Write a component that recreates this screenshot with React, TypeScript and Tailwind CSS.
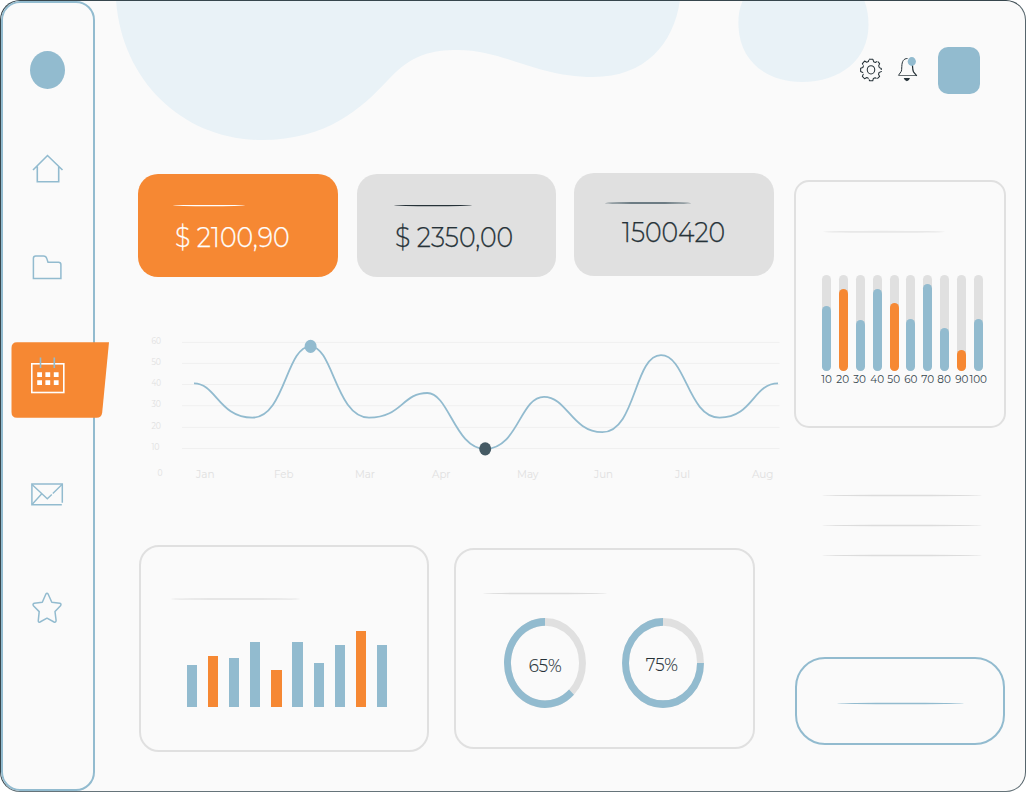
import React from "react";

const BLUE = "#92bbcf";
const ORANGE = "#f68833";

/* A hairline that swells in the middle and tapers at both ends. */
function Spindle({ width, color, cy = 1.5, ry = 0.7, className = "" }: {
  width: number;
  color: string;
  cy?: number;
  ry?: number;
  className?: string;
}) {
  return (
    <svg className={`block shrink-0 ${className}`} width={width} height={4} viewBox={`0 0 ${width} 4`}>
      <ellipse cx={width / 2} cy={cy} rx={width / 2} ry={ry} fill={color} />
    </svg>
  );
}

function Sidebar() {
  return (
    <aside className="flex h-[790px] w-[94px] shrink-0 flex-col rounded-[19px] border-2 border-[#92bbcf]">
      <div className="ml-[27px] mt-[48px] h-[38px] w-[35px] shrink-0 rounded-[50%] bg-[#92bbcf]" />

      <svg className="ml-[28px] mt-[64px] shrink-0" width="34" height="32" viewBox="31 153 34 32" fill="none" stroke={BLUE} strokeWidth="1.6">
        <path d="M33 170 47.5 155.5 62.5 170M37.3 166.5V181.7H58.7V166.5" />
      </svg>

      <svg className="ml-[28px] mt-[68px] shrink-0" width="34" height="28" viewBox="31 253 34 28" fill="none" stroke={BLUE} strokeWidth="1.5">
        <path d="M33.4 278.5V258.3Q33.4 256 35.7 256H43.5Q46 256 46.8 258.6L48 262.3H58.5Q60.9 262.3 60.9 264.6V278.5Z" />
      </svg>

      <div className="relative ml-[8px] mt-[61px] h-[76px] w-[98px] shrink-0">
        <svg className="block" width="98" height="76" viewBox="11 342 98 76">
          <path d="M17 342.3H109L102.2 412.5Q101.6 417.8 96.5 417.8H17Q11.5 417.8 11.5 412V348Q11.5 342.3 17 342.3Z" fill={ORANGE} />
          <rect x="31.8" y="363.8" width="32" height="28.7" fill="none" stroke="#fff" strokeWidth="1.6" />
          <path d="M40.5 357.5V368M54.3 357.5V368" stroke={BLUE} strokeWidth="1.6" />
          <path d="M37.2 372.3h4.8v4.8h-4.8zM45.4 372.3h4.8v4.8h-4.8zM53.8 372.3h4.8v4.8h-4.8zM37.2 380.3h4.8v4.8h-4.8zM45.4 380.3h4.8v4.8h-4.8zM53.8 380.3h4.8v4.8h-4.8z" fill="#fff" />
        </svg>
      </div>

      <svg className="ml-[26px] mt-[63px] shrink-0" width="36" height="28" viewBox="29 481 36 28" fill="none" stroke={BLUE} strokeWidth="1.5">
        <path d="M62.3 502.8V484H31.9V504.8H61.8" />
        <path d="M32 484.5 47.3 498.7 51.8 494.4M52.8 493.4 62 484.6M32 504.5 41.8 493.8" strokeWidth="1.4" />
      </svg>

      <svg className="ml-[27px] mt-[81px] shrink-0" width="34" height="36" viewBox="30 590 34 36" fill="none" stroke={BLUE} strokeWidth="1.5" strokeLinejoin="round">
        <path d="M45.8 594.2Q47 592.4 48.2 594.2L51.8 602.2 59.8 603.3Q61.8 604 60.5 605.7L55 611.6 56.1 620.3Q56.1 622.7 54 622L47 618.2 40 622Q38 622.7 38.3 620.3L39.2 611.6 33.4 605.7Q32.3 604 34.3 603.3L42.3 602.2Z" />
      </svg>
    </aside>
  );
}

function Header() {
  return (
    <header className="flex h-[172px] items-start justify-end pr-[45px] pt-[46px]">
      <svg className="mt-[10px]" width="24" height="26" viewBox="858.5 57 25 27" fill="none" stroke="#263238" strokeWidth="1.1">
        <path d="M868.9 59.4H873L873.8 62 875.5 62.7 877.8 61.3 880 63.8 879 66.2 879.7 68 881.7 69V72.2L879.4 73.1 878.8 75 880 77.2 877.5 79.7 875.3 78.5 873.5 79.3 872.8 81.7H869.5L868.6 79.3 866.7 78.4 864.3 79.6 862 77.1 863 74.8 862.4 73 860.2 72V68.7L862.5 67.9 863.2 66 862 63.8 864.3 61.2 866.5 62.4 868.3 61.7Z" strokeLinejoin="round" strokeDasharray="11 1" />
        <ellipse cx="871" cy="70.3" rx="3.9" ry="4.3" />
      </svg>
      <svg className="ml-[13px] mt-[8px]" width="24" height="30" viewBox="896 55 24 30" fill="none" stroke="#263238">
        <path d="M898.5 75.3 901.3 71.3Q901.7 70.5 901.8 66.5C902 61 903.8 58.5 907.5 58.5" strokeWidth="1" />
        <path d="M911.8 61C913 64 912 69 913.5 72L916.8 75.8" strokeWidth="1.2" />
        <path d="M898.5 75.5H917" strokeWidth=".7" />
        <path d="M903.7 78H910Q909 81.2 906.9 81.2T903.7 78Z" fill="#263238" stroke="none" />
        <ellipse cx="911.8" cy="61.5" rx="4.1" ry="4.4" fill={BLUE} stroke="none" />
      </svg>
      <div className="ml-[18px] h-[47px] w-[42px] rounded-[10px] bg-[#92bbcf]" />
    </header>
  );
}

function StatCards() {
  return (
    <div className="flex h-[104px] w-[636px] items-start justify-between">
      <div className="mt-px h-[103px] w-[200px] rounded-[20px] bg-[#f68833] pl-[35px] pt-[30px] text-white">
        <Spindle width={72} color="#fff" cy={1.6} />
        <p className="ml-[2px] w-fit origin-left scale-x-90 whitespace-nowrap text-[28px] font-light leading-[58px] [-webkit-text-stroke:0.25px]">$ 2100,90</p>
      </div>
      <div className="mt-px h-[103px] w-[199px] rounded-[20px] bg-[#e0e0e0] pl-[37px] pt-[30px] text-[#263238]">
        <Spindle width={78} color="#263238" cy={1.6} />
        <p className="ml-px w-fit origin-left scale-x-90 whitespace-nowrap text-[28px] font-light leading-[58px] [-webkit-text-stroke:0.25px]">$ 2350,00</p>
      </div>
      <div className="h-[103px] w-[200px] rounded-[20px] bg-[#e0e0e0] pl-[31px] pt-[28px] text-[#263238]">
        <Spindle width={86} color="#455a64" cy={2} ry={0.8} />
        <p className="ml-[17px] w-fit origin-left scale-x-90 whitespace-nowrap text-[28px] font-light leading-[54px] [-webkit-text-stroke:0.25px]">1500420</p>
      </div>
    </div>
  );
}

const yTicks: [string, number, number][] = [
  ["60", 343.7, 151.5],
  ["50", 365, 151.5],
  ["40", 385.7, 151.5],
  ["30", 407, 151.5],
  ["20", 429, 151.5],
  ["10", 450, 151.5],
  ["0", 476.3, 157.5],
];
const months: [string, number, number][] = [
  ["Jan", 196, 18.5],
  ["Feb", 274, 19.5],
  ["Mar", 355, 20],
  ["Apr", 432, 18.5],
  ["May", 517, 21.5],
  ["Jun", 594, 19],
  ["Jul", 675, 15],
  ["Aug", 752, 21.5],
];

function LineChart() {
  return (
    <svg className="mt-[48px] block overflow-visible" width="636" height="165" viewBox="138 325 636 165">
      {[342.4, 363.4, 384.5, 405.7, 427.4, 448.5].map((y) => (
        <path key={y} d={`M182 ${y}H779.5`} stroke="#f0f0f0" strokeWidth="1" />
      ))}
      {yTicks.map(([label, y, x]) => (
        <text key={label} x={x} y={y} fontSize="9" fill="#e0e0e0" textLength={label === "0" ? 5 : label === "10" ? 8 : 9.5} lengthAdjust="spacingAndGlyphs">
          {label}
        </text>
      ))}
      {months.map(([label, x, w]) => (
        <text key={label} x={x} y="478" fontSize="12" fill="#e0e0e0" textLength={w} lengthAdjust="spacingAndGlyphs">
          {label}
        </text>
      ))}
      <path
        d="M194 383.3C216 383.3 219 417.6 252.4 417.6C285 417.6 286 346.3 310.5 346.3C333 346.3 336 417.6 369 417.6C402 417.6 402 393 427.3 393C449 393 455 449 485.3 449C518 449 520 396.8 544 396.8C567 396.8 572 432.2 602.3 432.2C636 432.2 634 355.2 661 355.2C686 355.2 688 417.6 719.5 417.6C753 417.6 753 383.3 778 383.3"
        fill="none"
        stroke={BLUE}
        strokeWidth="1.8"
      />
      <ellipse cx="310.6" cy="346.4" rx="6" ry="6.6" fill={BLUE} />
      <ellipse cx="485.2" cy="448.8" rx="6" ry="6.6" fill="#455a64" />
    </svg>
  );
}

const columns = [
  { h: 42.5 },
  { h: 51.5, hot: true },
  { h: 48.7 },
  { h: 65 },
  { h: 37, hot: true },
  { h: 64.7 },
  { h: 43.7 },
  { h: 61.9 },
  { h: 75.8, hot: true },
  { h: 62.5 },
];

function ColumnCard() {
  return (
    <section className="ml-px h-[207px] w-[290px] shrink-0 rounded-[20px] border-2 border-[#e0e0e0] pl-[30px] pt-[50px]">
      <Spindle width={129} color="#e6e6e6" cy={2} ry={1} />
      <div className="ml-[15.5px] mt-[26px] flex h-[80px] w-[201px] items-end justify-between">
        {columns.map((c, i) => (
          <div key={i} className={c.hot ? "w-[10.3px] bg-[#f68833]" : "w-[10.3px] bg-[#92bbcf]"} style={{ height: c.h }} />
        ))}
      </div>
    </section>
  );
}

function Donut({ label, arc, shift }: { label: string; arc: string; shift: string }) {
  return (
    <div className="grid h-[90px] w-[82px] place-items-center *:[grid-area:1/1]">
      <svg width="82" height="90" viewBox="0 0 82 82" preserveAspectRatio="none" fill="none" strokeWidth="6.9">
        <circle cx="41" cy="41" r="37.5" stroke="#e0e0e0" />
        <path d={arc} stroke={BLUE} />
      </svg>
      <span className={`scale-x-90 whitespace-nowrap text-[18.5px] font-light leading-none text-[#263238] [-webkit-text-stroke:0.15px] ${shift}`}>{label}</span>
    </div>
  );
}

function DonutCard() {
  return (
    <section className="mt-[3px] h-[201px] w-[301px] shrink-0 rounded-[20px] border-2 border-[#e0e0e0] pl-[27px] pt-[42px]">
      <Spindle width={124} color="#dcdcdc" cy={1.5} ry={0.8} />
      <div className="ml-[21px] mt-[22px] flex gap-[36.4px]">
        <Donut label="65%" arc="M41 3.5A37.5 37.5 0 1 0 67.5 67.5" shift="pt-[6px] pl-px" />
        <Donut label="75%" arc="M41 3.5A37.5 37.5 0 1 0 78.5 41" shift="-ml-[4px] pt-[5px]" />
      </div>
    </section>
  );
}

const gauges = [
  { n: 10, h: 65 },
  { n: 20, h: 82, hot: true },
  { n: 30, h: 51.5 },
  { n: 40, h: 82 },
  { n: 50, h: 68, hot: true },
  { n: 60, h: 52 },
  { n: 70, h: 87 },
  { n: 80, h: 43 },
  { n: 90, h: 21, hot: true },
  { n: 100, h: 52 },
];

function GaugeCard() {
  return (
    <section className="h-[248px] w-[212px] rounded-[15px] border-2 border-[#e0e0e0] pl-[27px] pt-[48px]">
      <Spindle width={122} color="#e8e8e8" cy={1.8} ry={1} />
      <div className="-ml-[5px] mt-[41px] flex">
        {gauges.map((g) => (
          <div key={g.n} className="flex w-[16.92px] flex-col items-center">
            <div className="flex h-[96px] w-[9px] flex-col justify-end rounded-full bg-[#e0e0e0]">
              <div className={g.hot ? "rounded-full bg-[#f68833]" : "rounded-full bg-[#92bbcf]"} style={{ height: g.h }} />
            </div>
            <span className="mt-[3px] -translate-x-[0.3px] scale-x-[0.92] whitespace-nowrap text-[11.3px] leading-[11px] text-[#37474f]">{g.n}</span>
          </div>
        ))}
      </div>
    </section>
  );
}

export default function App() {
  return (
    <div className="h-[793px] w-[1026px] overflow-hidden bg-white font-['Montserrat','Inter',sans-serif]">
      <div className="relative flex h-[792px] w-[1026px] overflow-hidden rounded-[20px] border border-[#37464d] border-b-[#66747a] border-r-[#56656c] bg-[#fafafa]">
        <svg className="pointer-events-none absolute left-0 top-0" width="1024" height="160" viewBox="1 1 1024 160">
          <path d="M116 0C122 82 184 140 262 140C327 140 362 108 388 80C412 54 432 50 458 50C504 50 536 77 593 77C646 77 674 43 680 0Z" fill="#e9f2f7" />
          <path d="M743 0C739 9 738 17 738.5 27C740 60 765 82 802 82C840 82 868.5 60 868.5 25C868.5 15 867 7 864 0Z" fill="#e9f2f7" />
        </svg>

        <div className="relative z-10">
          <Sidebar />
        </div>

        <main className="relative flex-1">
          <Header />
          <div className="flex gap-[20px] pl-[43px]">
            <div className="w-[636px]">
              <StatCards />
              <LineChart />
              <div className="mt-[55px] flex items-start gap-[25px]">
                <ColumnCard />
                <DonutCard />
              </div>
            </div>

            <div className="w-[212px] pt-[7px]">
              <GaugeCard />
              <div className="ml-[28px] mt-[66px] flex flex-col gap-[26px]">
                <Spindle width={160} color="#dcdcdc" cy={1.5} ry={0.8} />
                <Spindle width={160} color="#dcdcdc" cy={1.5} ry={0.8} />
                <Spindle width={160} color="#dcdcdc" cy={1.5} ry={0.8} />
              </div>
              <button className="ml-px mt-[99px] flex h-[88px] w-[210px] items-center justify-center rounded-[30px] border-2 border-[#92bbcf]">
                <Spindle width={127} color={BLUE} className="mt-[5px]" />
              </button>
            </div>
          </div>
        </main>
      </div>
    </div>
  );
}
